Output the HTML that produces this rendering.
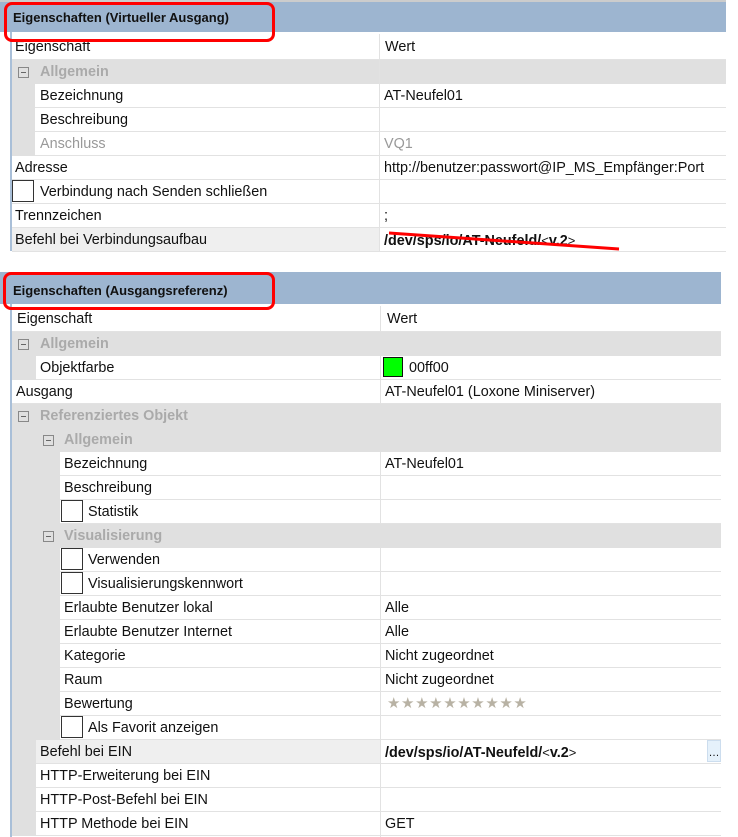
<!DOCTYPE html>
<html><head><meta charset="utf-8"><style>
*{margin:0;padding:0;box-sizing:border-box}
body{width:738px;height:837px;background:#fff;position:relative;overflow:hidden;font-family:"Liberation Sans",sans-serif;font-size:14.4px;color:#111}
.a{position:absolute}
.hd{background:#9db5d0;font-weight:bold;font-size:13px;padding:8px 0 0 13px}
.r{position:absolute;height:24px;border-bottom:1px solid #e2e2e2;background:#fff;line-height:25px;white-space:nowrap}
.g{position:absolute;height:24px;background:#e0e0e0;line-height:25px;color:#aaa;font-weight:bold;white-space:nowrap}
.gut{position:absolute;background:#e0e0e0}
.v{position:absolute;height:24px;line-height:25px;white-space:nowrap}
.mi{position:absolute;width:11px;height:11px;border:1px solid #888;top:7px}
.mi:after{content:"";position:absolute;left:2px;top:4px;width:5px;height:1px;background:#666}
.cb{position:absolute;width:22px;height:22px;border:1px solid #333;background:#fff;top:1px}
.vl{position:absolute;width:1px;background:#e2e2e2}
.red{position:absolute;border:3px solid #f00;border-radius:8px}
.st{color:#b8b2a4;font-size:15px;letter-spacing:0.6px}
</style></head><body>
<div class="a" style="left:0;top:0;width:726px;height:2px;background:#ccc"></div>
<div class="a hd" style="left:0;top:2px;width:726px;height:30px">Eigenschaften (Virtueller Ausgang)</div>
<div class="a" style="left:10px;top:32px;width:2px;height:219px;background:#a9bfd8"></div>
<div class="r" style="left:12px;top:32px;width:714px;height:28px;line-height:30px;padding-left:3px">Eigenschaft</div>
<div class="v" style="left:385px;top:35px">Wert</div>
<div class="g" style="left:12px;top:60px;width:714px;padding-left:28px">Allgemein</div><div class="mi" style="left:18px;top:67px"></div>
<div class="gut" style="left:12px;top:84px;width:23px;height:72px"></div>
<div class="r" style="left:35px;top:84px;width:691px;padding-left:5px">Bezeichnung</div><div class="v" style="left:384px;top:84px">AT-Neufel01</div>
<div class="r" style="left:35px;top:108px;width:691px;padding-left:5px">Beschreibung</div>
<div class="r" style="left:35px;top:132px;width:691px;padding-left:5px;color:#999">Anschluss</div><div class="v" style="left:384px;top:132px;color:#999">VQ1</div>
<div class="r" style="left:12px;top:156px;width:714px;padding-left:3px">Adresse</div><div class="v" style="left:384px;top:156px">http://benutzer:passwort@IP_MS_Empfänger:Port</div>
<div class="r" style="left:12px;top:180px;width:714px;padding-left:28px">Verbindung nach Senden schließen</div><div class="cb" style="left:12px;top:180px"></div>
<div class="r" style="left:12px;top:204px;width:714px;padding-left:3px">Trennzeichen</div><div class="v" style="left:384px;top:204px">;</div>
<div class="r" style="left:12px;top:228px;width:714px;padding-left:3px;background:#efefef">Befehl bei Verbindungsaufbau</div>
<div class="a" style="left:380px;top:228px;width:346px;height:23px;background:#fff"></div>
<div class="v" style="left:384px;top:228px;font-weight:bold">/dev/sps/io/AT-Neufeld/<span style="font-weight:normal;font-size:13px">&lt;</span>v.2<span style="font-weight:normal;font-size:13px">&gt;</span></div>
<div class="vl" style="left:379px;top:34px;height:217px"></div>
<svg class="a" style="left:0;top:0" width="738" height="260"><line x1="389" y1="233" x2="619" y2="249" stroke="#f00" stroke-width="3"/></svg>
<div class="red" style="left:4px;top:2px;width:271px;height:40px"></div>

<div class="a hd" style="left:0;top:272px;width:721px;height:32px;padding-top:11px">Eigenschaften (Ausgangsreferenz)</div>
<div class="a" style="left:10px;top:304px;width:2px;height:533px;background:#a9bfd8"></div>
<div class="r" style="left:12px;top:304px;width:709px;height:28px;line-height:30px;padding-left:5px">Eigenschaft</div><div class="v" style="left:387px;top:307px">Wert</div>
<div class="g" style="left:12px;top:332px;width:709px;padding-left:28px">Allgemein</div><div class="mi" style="left:18px;top:339px"></div>
<div class="gut" style="left:12px;top:356px;width:24px;height:24px"></div>
<div class="r" style="left:36px;top:356px;width:685px;padding-left:4px">Objektfarbe</div>
<div class="a" style="left:383px;top:357px;width:20px;height:20px;background:#0f0;border:1px solid #111"></div><div class="v" style="left:409px;top:356px">00ff00</div>
<div class="r" style="left:12px;top:380px;width:709px;padding-left:4px">Ausgang</div><div class="v" style="left:385px;top:380px">AT-Neufel01 (Loxone Miniserver)</div>
<div class="g" style="left:12px;top:404px;width:709px;padding-left:28px">Referenziertes Objekt</div><div class="mi" style="left:18px;top:411px"></div>
<div class="gut" style="left:12px;top:428px;width:24px;height:408px"></div>
<div class="g" style="left:36px;top:428px;width:685px;padding-left:28px">Allgemein</div><div class="mi" style="left:43px;top:435px"></div>
<div class="gut" style="left:36px;top:452px;width:24px;height:288px"></div>
<div class="r" style="left:60px;top:452px;width:661px;padding-left:4px">Bezeichnung</div><div class="v" style="left:385px;top:452px">AT-Neufel01</div>
<div class="r" style="left:60px;top:476px;width:661px;padding-left:4px">Beschreibung</div>
<div class="r" style="left:60px;top:500px;width:661px;padding-left:28px">Statistik</div><div class="cb" style="left:61px;top:500px"></div>
<div class="g" style="left:36px;top:524px;width:685px;padding-left:28px">Visualisierung</div><div class="mi" style="left:43px;top:531px"></div>
<div class="r" style="left:60px;top:548px;width:661px;padding-left:28px">Verwenden</div><div class="cb" style="left:61px;top:548px"></div>
<div class="r" style="left:60px;top:572px;width:661px;padding-left:28px">Visualisierungskennwort</div><div class="cb" style="left:61px;top:572px"></div>
<div class="r" style="left:60px;top:596px;width:661px;padding-left:4px">Erlaubte Benutzer lokal</div><div class="v" style="left:385px;top:596px">Alle</div>
<div class="r" style="left:60px;top:620px;width:661px;padding-left:4px">Erlaubte Benutzer Internet</div><div class="v" style="left:385px;top:620px">Alle</div>
<div class="r" style="left:60px;top:644px;width:661px;padding-left:4px">Kategorie</div><div class="v" style="left:385px;top:644px">Nicht zugeordnet</div>
<div class="r" style="left:60px;top:668px;width:661px;padding-left:4px">Raum</div><div class="v" style="left:385px;top:668px">Nicht zugeordnet</div>
<div class="r" style="left:60px;top:692px;width:661px;padding-left:4px">Bewertung</div><div class="v st" style="left:387px;top:691px">★★★★★★★★★★</div>
<div class="r" style="left:60px;top:716px;width:661px;padding-left:28px">Als Favorit anzeigen</div><div class="cb" style="left:61px;top:716px"></div>
<div class="r" style="left:36px;top:740px;width:685px;padding-left:4px;background:#efefef">Befehl bei EIN</div>
<div class="a" style="left:381px;top:740px;width:340px;height:23px;background:#fff"></div>
<div class="v" style="left:385px;top:740px;font-weight:bold">/dev/sps/io/AT-Neufeld/<span style="font-weight:normal;font-size:13px">&lt;</span>v.2<span style="font-weight:normal;font-size:13px">&gt;</span></div>
<div class="a" style="left:707px;top:740px;width:14px;height:22px;background:#e5f1fb;border:1px solid #cde;font-size:11px;line-height:24px;text-align:center">…</div>
<div class="r" style="left:36px;top:764px;width:685px;padding-left:4px">HTTP-Erweiterung bei EIN</div>
<div class="r" style="left:36px;top:788px;width:685px;padding-left:4px">HTTP-Post-Befehl bei EIN</div>
<div class="r" style="left:36px;top:812px;width:685px;padding-left:4px">HTTP Methode bei EIN</div><div class="v" style="left:385px;top:812px">GET</div>
<div class="vl" style="left:380px;top:306px;height:26px"></div>
<div class="vl" style="left:380px;top:356px;height:48px"></div>
<div class="vl" style="left:380px;top:452px;height:72px"></div>
<div class="vl" style="left:380px;top:548px;height:289px"></div>
<div class="red" style="left:3px;top:272px;width:272px;height:38px"></div>
</body></html>
